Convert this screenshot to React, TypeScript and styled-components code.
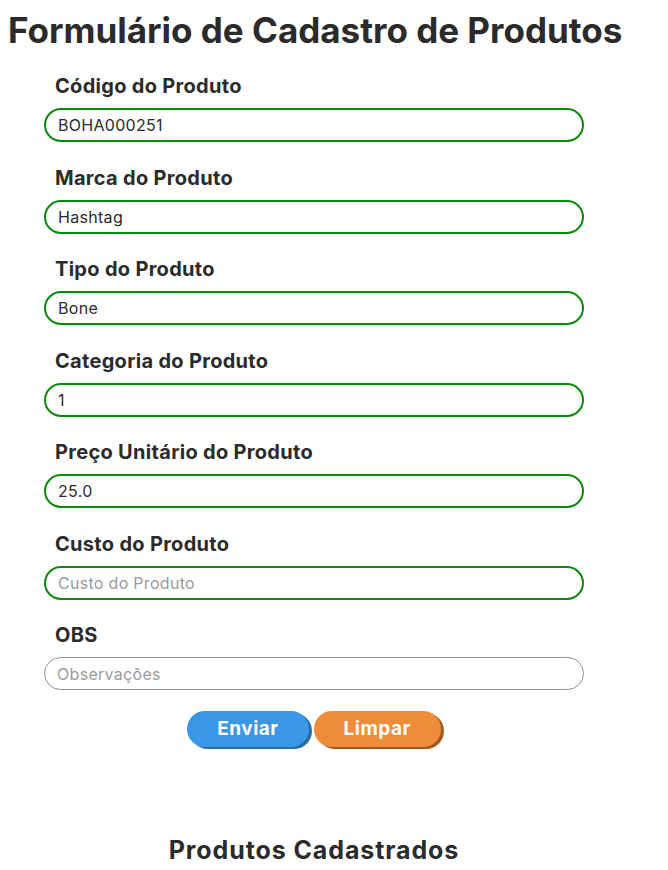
import React from "react";
import styled, { createGlobalStyle } from "styled-components";

const Global = createGlobalStyle`
  html, body { margin: 0; padding: 0; background: #ffffff; }
  body { font-family: Inter, "DejaVu Sans", sans-serif; color: #2b2b2b; }
  * { box-sizing: border-box; }
`;

const Page = styled.div`
  width: 612px;
  margin-left: 8px;
  display: flex;
  flex-direction: column;
  align-items: center;
`;

const Title = styled.h1`
  margin: 10px 0 0 0;
  align-self: flex-start;
  font-size: 35px;
  font-weight: 700;
  line-height: 40px;
  color: #2b2b2b;
  white-space: nowrap;
`;

const Form = styled.form`
  width: 540px;
  display: flex;
  flex-direction: column;
  margin-top: 24px;
`;

const Group = styled.div`
  display: flex;
  flex-direction: column;
  margin-bottom: 23.5px;
`;

const Label = styled.label`
  padding-left: 11px;
  font-size: 20px;
  font-weight: 700;
  letter-spacing: 0.3px;
  line-height: 24px;
  margin-bottom: 10px;
  color: #2b2b2b;
`;

const Input = styled.input<{ $plain?: boolean }>`
  width: 540px;
  height: ${(p) => (p.$plain ? "33px" : "34px")};
  border-radius: 18px;
  border: ${(p) => (p.$plain ? "1px solid #8f8f8f" : "2px solid #0a8a0a")};
  padding: 0 12px;
  font-family: Inter, "DejaVu Sans", sans-serif;
  font-size: 16px;
  letter-spacing: 0.3px;
  color: #2b2b2b;
  outline: none;
  background: #fff;
  &::placeholder { color: #9a9a9a; }
`;

const Buttons = styled.div`
  display: flex;
  justify-content: center;
  gap: 5px;
  margin-top: -3px;
`;

const Button = styled.button<{ $bg: string; $shade: string }>`
  height: 36px;
  padding: 0 30px;
  border: none;
  border-radius: 18px;
  background: ${(p) => p.$bg};
  box-shadow: 3px 2px 0 ${(p) => p.$shade};
  color: #fff;
  font-family: Inter, "DejaVu Sans", sans-serif;
  font-size: 19px;
  letter-spacing: 0.5px;
  font-weight: 700;
  cursor: pointer;
`;

const Subtitle = styled.h2`
  margin: 88px 0 0 0;
  font-size: 25px;
  font-weight: 700;
  letter-spacing: 0.9px;
  line-height: 30px;
  color: #2b2b2b;
`;

const fields = [
  { label: "Código do Produto", value: "BOHA000251" },
  { label: "Marca do Produto", value: "Hashtag" },
  { label: "Tipo do Produto", value: "Bone" },
  { label: "Categoria do Produto", value: "1" },
  { label: "Preço Unitário do Produto", value: "25.0" },
  { label: "Custo do Produto", value: "", placeholder: "Custo do Produto" },
];

export default function App() {
  return (
    <>
      <Global />
      <Page>
        <Title>Formulário de Cadastro de Produtos</Title>
        <Form onSubmit={(e) => e.preventDefault()}>
          {fields.map((f) => (
            <Group key={f.label}>
              <Label>{f.label}</Label>
              <Input defaultValue={f.value} placeholder={f.placeholder} />
            </Group>
          ))}
          <Group>
            <Label>OBS</Label>
            <Input $plain placeholder="Observações" />
          </Group>
          <Buttons>
            <Button type="submit" $bg="#3a97e6" $shade="#2a6aa8">Enviar</Button>
            <Button type="button" $bg="#ee8c3a" $shade="#a65a22">Limpar</Button>
          </Buttons>
        </Form>
        <Subtitle>Produtos Cadastrados</Subtitle>
      </Page>
    </>
  );
}
